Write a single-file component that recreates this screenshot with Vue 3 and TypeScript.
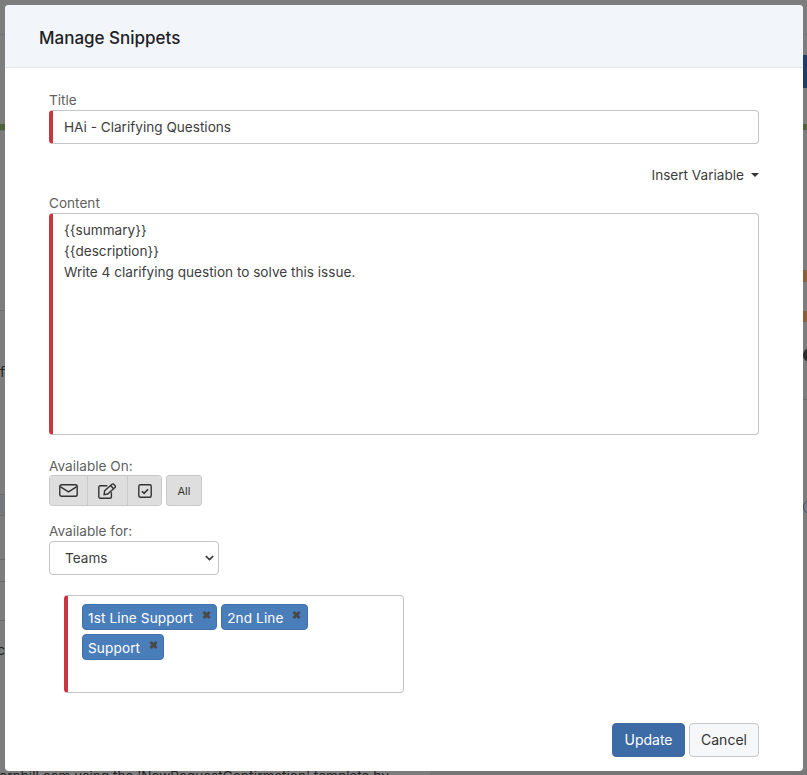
<script setup lang="ts">
const tags = ['1st Line Support', '2nd Line', 'Support']

// slivers of the page behind the dialog, visible through the backdrop
const slivers = [
  { left: 0, top: 34, width: 5, height: 1, background: '#747474' },
  { left: 0, top: 124, width: 5, height: 6, background: '#4f6238' },
  { left: 0, top: 130, width: 5, height: 1, background: '#6e6e6e' },
  { left: 0, top: 310, width: 5, height: 1, background: '#6f6f6f' },
  { left: 0, top: 494, width: 5, height: 1, background: '#6c6c6c' },
  { left: 0, top: 495, width: 5, height: 20, background: '#76777a' },
  { left: 0, top: 515, width: 5, height: 1, background: '#6c6c6c' },
  { left: 0, top: 559, width: 5, height: 1, background: '#6a6a6a' },
  { left: 0, top: 581, width: 5, height: 1, background: '#6a6a6a' },
  { left: 0, top: 620, width: 5, height: 1, background: '#6a6a6a' },
  { left: 803, top: 34, width: 4, height: 1, background: '#747474' },
  { left: 803, top: 55, width: 4, height: 33, background: '#1f3d66' },
  { left: 803, top: 124, width: 4, height: 6, background: '#4f6238' },
  { left: 803, top: 270, width: 4, height: 12, background: '#8f5f33' },
  { left: 803, top: 311, width: 4, height: 11, background: '#8f5f33' },
  { left: 803, top: 399, width: 4, height: 1, background: '#6e6e6e' },
  { left: 430, top: 771, width: 377, height: 4, background: '#767676' },
]
</script>

<template>
  <div class="backdrop">
    <div
      v-for="(s, i) in slivers"
      :key="i"
      class="sliver"
      :style="{
        left: s.left + 'px',
        top: s.top + 'px',
        width: s.width + 'px',
        height: s.height + 'px',
        background: s.background,
      }"
    ></div>
    <div class="blob"></div>
    <div class="ring"></div>
    <div class="behind-text">ornbill.com using the 'NewRequestConfirmation' template by</div>
    <div class="side-text side-a">of</div>
    <div class="side-text side-b">c</div>

    <div class="modal">
      <header class="modal-header">
        <h2>Manage Snippets</h2>
      </header>

      <div class="modal-body">
        <label class="field-label">Title</label>
        <div class="control required title-input">HAi - Clarifying Questions</div>

        <div class="insert-row">
          <span>Insert Variable</span>
          <i class="caret"></i>
        </div>

        <label class="field-label">Content</label>
        <div class="control required content-input">
          <div>{{ '{' + '{summary}' + '}' }}</div>
          <div>{{ '{' + '{description}' + '}' }}</div>
          <div>Write 4 clarifying question to solve this issue.</div>
        </div>

        <label class="field-label on-label">Available On:</label>
        <div class="toggles">
          <div class="btn-group">
            <button class="toggle">
              <svg width="19" height="13" viewBox="0 0 19 13" fill="none" stroke="#333" stroke-width="1.4">
                <rect x="0.8" y="0.8" width="17.4" height="11.4" rx="1.8" />
                <path d="M1.2 2.6 9.5 7.8l8.3-5.2" />
              </svg>
            </button>
            <button class="toggle">
              <svg width="19" height="16" viewBox="0 0 19 16" fill="none" stroke="#333" stroke-width="1.4">
                <path d="M13.4 9.2v4.6a1.5 1.5 0 0 1-1.5 1.5H2.3a1.5 1.5 0 0 1-1.5-1.5V4.2a1.5 1.5 0 0 1 1.5-1.5h7" />
                <path d="M6.6 7.8 14 1.2a1.2 1.2 0 0 1 1.7.1l1.4 1.5a1.2 1.2 0 0 1-.1 1.7L9.7 11l-3.6.6z" />
                <path d="m12.6 2.6 3 3.2" />
              </svg>
            </button>
            <button class="toggle">
              <svg width="14" height="14" viewBox="0 0 14 14" fill="none" stroke="#333">
                <rect x="0.8" y="0.8" width="12.4" height="12.4" rx="1.5" stroke-width="1.4" />
                <path d="m3.9 7.2 2.2 2.2 4-4.2" stroke-width="1.6" />
              </svg>
            </button>
          </div>
          <button class="toggle all">All</button>
        </div>

        <label class="field-label for-label">Available for:</label>
        <div class="control team-select">
          <span>Teams</span>
          <svg width="9" height="6" viewBox="0 0 9 6" fill="none" stroke="#333" stroke-width="1.7">
            <path d="m.8 1 3.7 3.6L8.2 1" />
          </svg>
        </div>

        <div class="control required tag-box">
          <span v-for="tag in tags" :key="tag" class="tag">
            {{ tag }}
            <b class="tag-x">✖</b>
          </span>
        </div>

        <footer class="actions">
          <button class="btn primary">Update</button>
          <button class="btn">Cancel</button>
        </footer>
      </div>
    </div>
  </div>
</template>

<style>
html,
body {
  margin: 0;
  height: 100%;
  overflow: hidden;
}
</style>

<style scoped>
.backdrop {
  position: relative;
  width: 807px;
  height: 775px;
  padding: 5px 4px 4px 5px;
  box-sizing: border-box;
  background: #7d7d7d;
  font-family: Inter, 'Liberation Sans', sans-serif;
  font-size: 13.6px;
  color: #3d3d3d;
  overflow: hidden;
}

.sliver {
  position: absolute;
}

.blob {
  position: absolute;
  left: 803px;
  top: 348px;
  width: 14px;
  height: 14px;
  border-radius: 50%;
  background: #2b2b2b;
}

.ring {
  position: absolute;
  left: 803px;
  top: 500px;
  width: 14px;
  height: 14px;
  box-sizing: border-box;
  border: 1.5px solid #2f4f7c;
  border-radius: 50%;
}

.behind-text {
  position: absolute;
  left: -1px;
  top: 768px;
  line-height: 17px;
  color: #222;
  white-space: nowrap;
}

.side-text {
  position: absolute;
  left: -11px;
  width: 16px;
  text-align: right;
  color: #222;
  line-height: 16px;
  overflow: hidden;
}

.side-a {
  top: 364px;
}

.side-b {
  top: 642px;
}

.modal {
  position: relative;
  height: 766px;
  background: #fff;
  border-radius: 4px;
  overflow: hidden;
}

.modal-header {
  box-sizing: border-box;
  height: 63px;
  padding: 3px 0 0 34px;
  display: flex;
  align-items: center;
  background: #f2f6fa;
  border-bottom: 1px solid #e4e6e8;
}

.modal-header h2 {
  margin: 0;
  font-size: 17px;
  font-weight: 500;
  color: #1f2225;
}

.modal-body {
  padding: 24px 44px 0;
}

.field-label {
  display: block;
  height: 18px;
  line-height: 16px;
  color: #5f5f5f;
}

.control {
  box-sizing: border-box;
  border: 1px solid #c4c4c4;
  border-radius: 4px;
  background: #fff;
}

.required {
  border-left: 4px solid #c9363f;
}

.title-input {
  width: 710px;
  height: 34px;
  padding-left: 11px;
  line-height: 32px;
}

.insert-row {
  height: 51px;
  padding-top: 10px;
  display: flex;
  justify-content: flex-end;
  align-items: center;
  gap: 7px;
  box-sizing: border-box;
}

.caret {
  width: 0;
  height: 0;
  border-left: 4px solid transparent;
  border-right: 4px solid transparent;
  border-top: 4px solid #333;
}

.content-input {
  width: 710px;
  height: 222px;
  padding: 6px 11px;
  line-height: 21px;
}

.on-label {
  height: 17px;
  margin-top: 23px;
}

.toggles {
  display: flex;
  gap: 4px;
}

.btn-group {
  display: flex;
  border: 1px solid #c9c9c9;
  border-radius: 3px;
  overflow: hidden;
}

.toggle {
  height: 29px;
  padding: 0;
  display: flex;
  align-items: center;
  justify-content: center;
  border: 0;
  background: #dedede;
  font: inherit;
}

.btn-group .toggle:nth-child(1) {
  width: 37px;
}

.btn-group .toggle:nth-child(2) {
  width: 40px;
  border-left: 1px solid #c9c9c9;
}

.btn-group .toggle:nth-child(3) {
  width: 34px;
  border-left: 1px solid #c9c9c9;
}

.all {
  box-sizing: border-box;
  width: 36px;
  height: 31px;
  border: 1px solid #c9c9c9;
  border-radius: 3px;
  font-size: 11px;
  color: #333;
}

.for-label {
  margin-top: 17px;
}

.team-select {
  width: 170px;
  height: 34px;
  padding: 0 4px 0 15px;
  display: flex;
  align-items: center;
  justify-content: space-between;
}

.tag-box {
  width: 340px;
  height: 98px;
  margin: 20px 0 0 15px;
  padding: 8px 14px;
  display: flex;
  flex-wrap: wrap;
  align-content: flex-start;
  gap: 4px;
}

.tag {
  height: 26px;
  padding: 1px 5.5px 0 5px;
  display: inline-flex;
  align-items: center;
  gap: 8.5px;
  box-sizing: border-box;
  background: #4a7ebb;
  border: 1px solid #3f70aa;
  border-radius: 4px;
  letter-spacing: 0.12px;
  color: #fff;
}

.tag-x {
  margin-top: -5px;
  font-size: 11px;
  line-height: 10px;
  color: #484848;
}

.actions {
  margin: 30px 0 0;
  display: flex;
  justify-content: flex-end;
  gap: 4px;
}

.btn {
  height: 34px;
  width: 70px;
  padding: 0 0 2px;
  border: 1px solid #c9c9c9;
  border-radius: 4px;
  background: #f6f7f8;
  font: inherit;
  font-size: 14px;
  color: #333;
}

.primary {
  width: 73px;
  border-color: #3d6ba6;
  background: #3d6ba6;
  color: #fff;
}
</style>
